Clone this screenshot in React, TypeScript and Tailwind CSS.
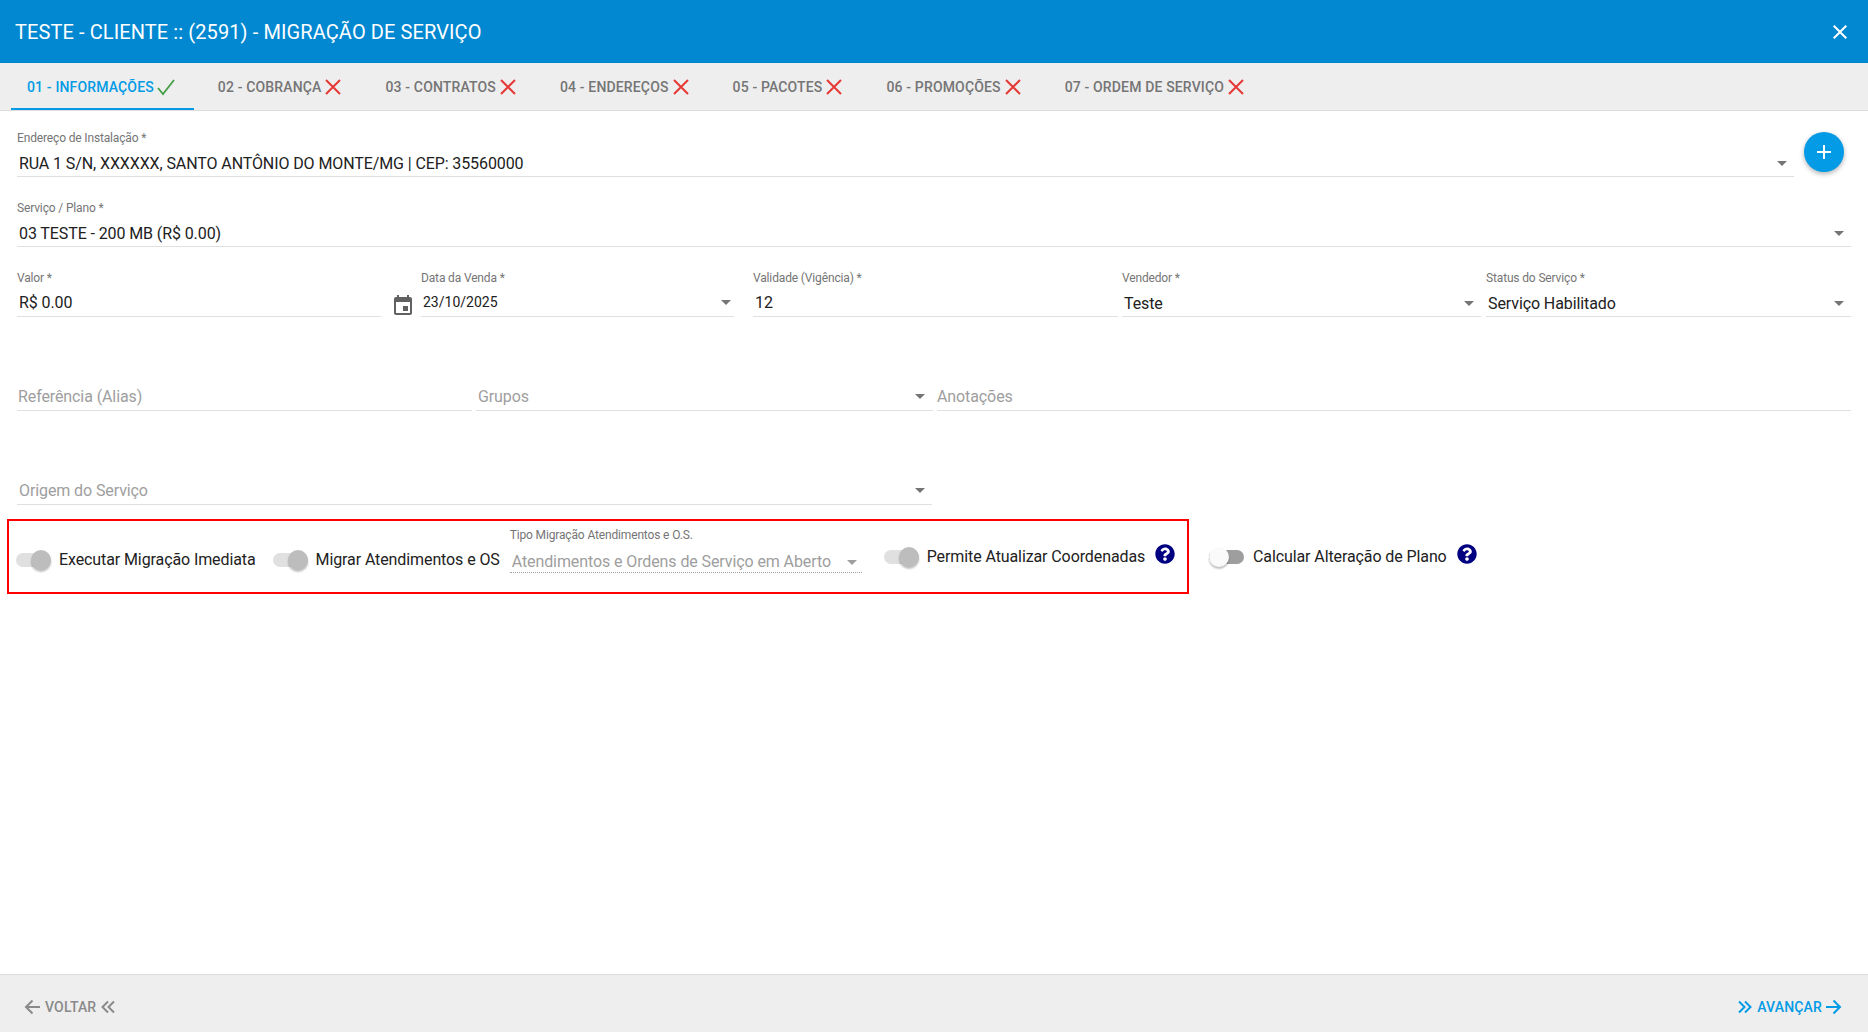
import { FaQuestionCircle } from "react-icons/fa";

const font = { fontFamily: "Roboto, sans-serif" };

const tabs = [
  { label: "01 - INFORMAÇÕES", ok: true },
  { label: "02 - COBRANÇA", ok: false },
  { label: "03 - CONTRATOS", ok: false },
  { label: "04 - ENDEREÇOS", ok: false },
  { label: "05 - PACOTES", ok: false },
  { label: "06 - PROMOÇÕES", ok: false },
  { label: "07 - ORDEM DE SERVIÇO", ok: false },
];

function CloseIcon({ className }: { className: string }) {
  return (
    <svg viewBox="0 0 24 24" fill="currentColor" className={className}>
      <path d="M19 6.41L17.59 5 12 10.59 6.41 5 5 6.41 10.59 12 5 17.59 6.41 19 12 13.41 17.59 19 19 17.59 13.41 12z" />
    </svg>
  );
}

function CheckIcon() {
  return (
    <svg viewBox="0 0 18 18" fill="none" stroke="#43a047" strokeWidth="1.8" className="h-[18px] w-[18px]">
      <path d="M1 10l5 6L17 2" />
    </svg>
  );
}

function Caret({ disabled, tight }: { disabled?: boolean; tight?: boolean }) {
  return (
    <span
      className={`h-0 w-0 shrink-0 border-x-[5px] border-t-[5px] border-x-transparent ${tight ? "mr-[3px]" : "mr-[7px]"} ${
        disabled ? "border-t-[#9e9e9e]" : "border-t-[#757575]"
      }`}
    />
  );
}

function Field({
  label,
  value,
  caret,
  small,
  raised,
  className,
}: {
  label?: string;
  value: string;
  caret?: boolean;
  small?: boolean;
  raised?: boolean;
  className: string;
}) {
  return (
    <div className={`flex flex-col ${className}`}>
      {label && (
        <div className="mb-[4px] h-[16px] text-[12px] leading-[16px] tracking-[-0.15px] text-[#757575]">{label}</div>
      )}
      <div
        className={`flex h-[27px] items-center justify-between border-b border-[#e0e0e0] pl-[2px] ${
          raised ? "pb-[1px]" : "pt-[1px]"
        }`}
      >
        <span className={small ? "text-[14px] text-[#212121]" : "text-[16px] tracking-[-0.1px] text-[#212121]"}>
          {value}
        </span>
        {caret && <Caret tight={small} />}
      </div>
    </div>
  );
}

function Placeholder({ value, caret, className }: { value: string; caret?: boolean; className: string }) {
  return (
    <div className={`flex h-[27px] items-center justify-between border-b border-[#e0e0e0] pb-[1px] ${className}`}>
      <span className="text-[16px] tracking-[-0.1px] text-[#9e9e9e]">{value}</span>
      {caret && <Caret />}
    </div>
  );
}

function Toggle({ on }: { on?: boolean }) {
  return (
    <div className={`relative h-[14px] w-[35px] shrink-0 rounded-full ${on ? "bg-[#e0e0e0]" : "bg-[#9e9e9e]"}`}>
      <div
        className={`absolute top-[-3px] h-[20px] w-[20px] rounded-full shadow-[0_2px_2px_rgba(0,0,0,0.25)] ${
          on ? "right-0 bg-[#bdbdbd]" : "left-0 bg-[#fafafa]"
        }`}
      />
    </div>
  );
}

export default function App() {
  return (
    <div className="flex h-screen flex-col overflow-hidden bg-white" style={font}>
      <header className="flex h-[63px] shrink-0 items-center justify-between bg-[#0288d1] pl-[15px] pr-[16px] text-white">
        <h1 className="text-[20px] font-normal tracking-[0.1px]">TESTE - CLIENTE :: (2591) - MIGRAÇÃO DE SERVIÇO</h1>
        <CloseIcon className="h-[24px] w-[24px]" />
      </header>

      <nav className="flex h-[48px] shrink-0 gap-[8px] border-b border-[#dddddd] bg-[#eeeeee] pl-[11px]">
        {tabs.map((tab) => (
          <div
            key={tab.label}
            className={`flex h-[47px] items-center gap-[3px] border-b-2 pl-[16px] pr-[19px] pt-[3px] text-[14px] font-medium tracking-[0.15px] ${
              tab.ok ? "border-[#039be5] text-[#039be5]" : "border-transparent text-[#757575]"
            }`}
          >
            <span>{tab.label}</span>
            {tab.ok ? (
              <CheckIcon />
            ) : (
              <svg viewBox="0 0 18 18" fill="none" stroke="#e53935" strokeWidth="2" className="h-[18px] w-[18px]">
                <path d="M2 2l14 14M16 2L2 16" />
              </svg>
            )}
          </div>
        ))}
      </nav>

      <main className="flex-1 overflow-hidden px-[17px]">
        <div className="flex h-[66px] items-end">
          <Field
            label="Endereço de Instalação *"
            value="RUA 1 S/N, XXXXXX, SANTO ANTÔNIO DO MONTE/MG | CEP: 35560000"
            caret
            className="flex-1"
          />
          <div className="mb-[5px] ml-[10px] mr-[7px] flex h-[40px] w-[40px] shrink-0 items-center justify-center rounded-full bg-[#039be5] text-white shadow-[0_2px_5px_rgba(0,0,0,0.3)]">
            <svg viewBox="0 0 24 24" fill="currentColor" className="h-[24px] w-[24px]">
              <path d="M19 13h-6v6h-2v-6H5v-2h6V5h2v6h6v2z" />
            </svg>
          </div>
        </div>

        <div className="flex h-[70px] items-end">
          <Field label="Serviço / Plano *" value="03 TESTE - 200 MB (R$ 0.00)" caret className="flex-1" />
        </div>

        <div className="flex h-[70px] items-end">
          <Field label="Valor *" value="R$ 0.00" raised className="w-[364px]" />
          <svg viewBox="0 0 24 24" fill="#616161" className="mb-[-1px] ml-[10px] mr-[6px] h-[24px] w-[24px] shrink-0">
            <path d="M17 12h-5v5h5v-5zM16 1v2H8V1H6v2H5c-1.11 0-1.99.9-1.99 2L3 19c0 1.1.89 2 2 2h14c1.1 0 2-.9 2-2V5c0-1.1-.9-2-2-2h-1V1h-2zm3 18H5V8h14v11z" />
          </svg>
          <Field label="Data da Venda *" value="23/10/2025" caret small raised className="w-[313px]" />
          <Field label="Validade (Vigência) *" value="12" raised className="ml-[19px] w-[365px]" />
          <Field label="Vendedor *" value="Teste" caret className="ml-[4px] w-[359px]" />
          <Field label="Status do Serviço *" value="Serviço Habilitado" caret className="ml-[5px] flex-1" />
        </div>

        <div className="flex h-[94px] items-end gap-[4px]">
          <Placeholder value="Referência (Alias)" className="w-[455px] pl-[1px]" />
          <Placeholder value="Grupos" caret className="w-[457px] pl-[2px] pr-[1px]" />
          <Placeholder value="Anotações" className="flex-1" />
        </div>

        <div className="flex h-[94px] items-end">
          <Placeholder value="Origem do Serviço" caret className="w-[915px] pl-[2px]" />
        </div>

        <div className="-ml-[10px] mt-[14px] flex items-start">
          <section className="flex h-[75px] w-[1182px] items-start border-2 border-[#ff0000] pl-[7px]">
            <div className="mt-[29px] flex items-center gap-[8px]">
              <Toggle on />
              <span className="text-[16px] leading-[20px] tracking-[-0.1px] text-[#212121]">
                Executar Migração Imediata
              </span>
            </div>
            <div className="ml-[17px] mt-[29px] flex items-center gap-[8px]">
              <Toggle on />
              <span className="text-[16px] leading-[20px] tracking-[-0.1px] text-[#212121]">
                Migrar Atendimentos e OS
              </span>
            </div>
            <div className="ml-[10px] mt-[6px] flex w-[352px] flex-col">
              <div className="mb-[3px] h-[16px] text-[12px] leading-[16px] tracking-[-0.15px] text-[#757575]">
                Tipo Migração Atendimentos e O.S.
              </div>
              <div className="flex h-[27px] items-center justify-between border-b border-dotted border-[#9e9e9e] pl-[2px] pt-[6px]">
                <span className="text-[16px] tracking-[-0.1px] text-[#9e9e9e]">
                  Atendimentos e Ordens de Serviço em Aberto
                </span>
                <span className="ml-auto mr-[5px] h-0 w-0 shrink-0 border-x-[5px] border-t-[5px] border-x-transparent border-t-[#9e9e9e]" />
              </div>
            </div>
            <div className="ml-[22px] mt-[26px] flex items-center gap-[8px]">
              <Toggle on />
              <span className="text-[16px] leading-[20px] tracking-[-0.1px] text-[#212121]">
                Permite Atualizar Coordenadas
              </span>
            </div>
            <FaQuestionCircle className="ml-[10px] mt-[23px] h-[20px] w-[20px] text-[#000080]" />
          </section>
          <div className="ml-[20px] mt-[28px] flex items-center gap-[9px]">
            <Toggle />
            <span className="text-[16px] leading-[20px] tracking-[-0.1px] text-[#212121]">
              Calcular Alteração de Plano
            </span>
          </div>
          <FaQuestionCircle className="ml-[10px] mt-[25px] h-[20px] w-[20px] text-[#000080]" />
        </div>
      </main>

      <footer className="flex h-[58px] shrink-0 items-center justify-between border-t border-[#dddddd] bg-[#eeeeee] pl-[23px] pr-[25px] pt-[7px] text-[14px] font-medium tracking-[0.15px]">
        <div className="flex items-center gap-[2px] text-[#8a8a8a]">
          <svg viewBox="0 0 18 18" fill="none" stroke="currentColor" strokeWidth="2" className="h-[18px] w-[18px]">
            <path d="M17 9H3M9.5 2.5L3 9l6.5 6.5" />
          </svg>
          <span className="ml-[2px]">VOLTAR</span>
          <svg viewBox="0 0 16 16" fill="none" stroke="currentColor" strokeWidth="2" className="ml-[2px] h-[16px] w-[16px]">
            <path d="M8 2.5L2.5 8 8 13.5M14 2.5L8.5 8l5.5 5.5" />
          </svg>
        </div>
        <div className="flex items-center gap-[3px] text-[#039be5]">
          <svg viewBox="0 0 16 16" fill="none" stroke="currentColor" strokeWidth="2" className="mr-[1px] h-[16px] w-[16px]">
            <path d="M2 2.5L7.5 8 2 13.5M8 2.5L13.5 8 8 13.5" />
          </svg>
          <span>AVANÇAR</span>
          <svg viewBox="0 0 18 18" fill="none" stroke="currentColor" strokeWidth="2" className="h-[18px] w-[18px]">
            <path d="M1 9h14M8.5 2.5L15 9l-6.5 6.5" />
          </svg>
        </div>
      </footer>
    </div>
  );
}
